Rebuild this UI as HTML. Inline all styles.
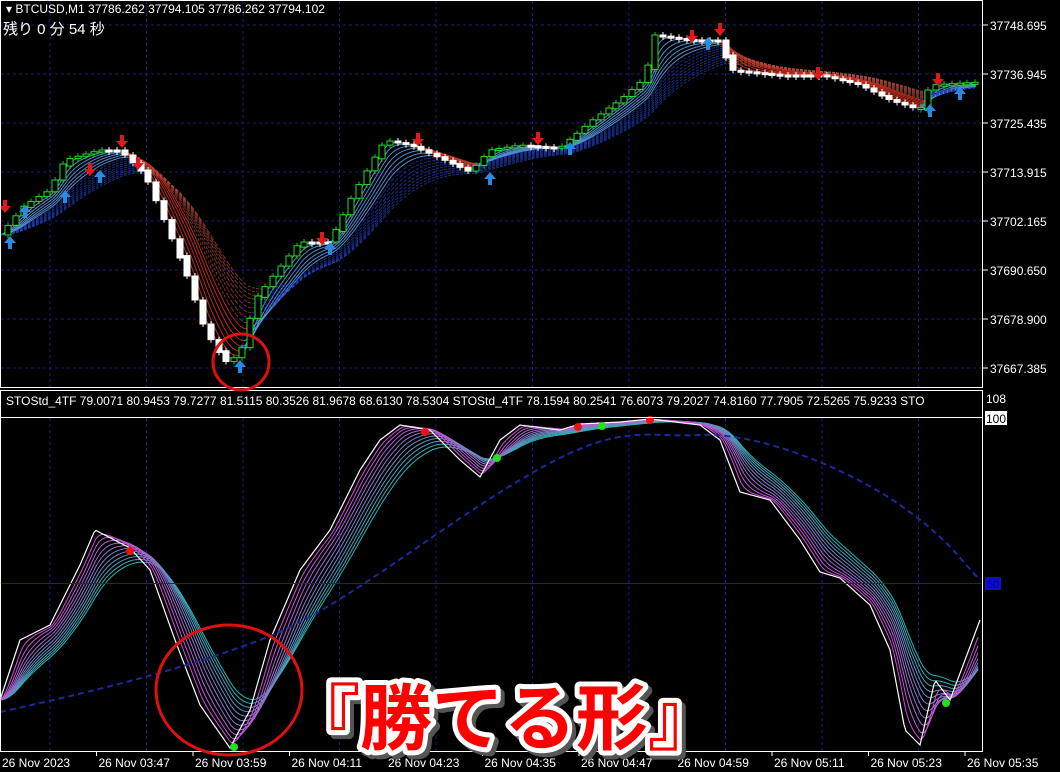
<!DOCTYPE html>
<html><head><meta charset="utf-8"><style>
html,body{margin:0;padding:0;background:#000;width:1060px;height:772px;overflow:hidden}
svg{display:block}
text{font-family:"Liberation Sans","Noto Sans CJK JP",sans-serif}
</style></head><body>
<svg id="s" width="1060" height="772" viewBox="0 0 1060 772" xmlns="http://www.w3.org/2000/svg">
<rect width="1060" height="772" fill="#000"/>
<g id="grid" stroke="#1c1c7a" stroke-dasharray="3,3" stroke-width="1"></g>
<g id="main"></g>
<g id="ind"></g>
<rect x="0.5" y="0.5" width="982" height="387" fill="none" stroke="#fff"/>
<rect x="0.5" y="390.5" width="982" height="361" fill="none" stroke="#fff"/>
<line x1="1" y1="417.5" x2="982" y2="417.5" stroke="#fff"/>
<line x1="1" y1="583.5" x2="982" y2="583.5" stroke="#1414d8"/>
<rect x="985" y="577" width="16" height="13" fill="#1010c0"/>
<text x="987" y="588" font-size="11" fill="#0000a0">50</text>
<g id="axis" fill="#fff" font-size="12"></g>
<text x="6" y="13" font-size="12" fill="#fff">▾ BTCUSD,M1  37786.262 37794.105 37786.262 37794.102</text>
<text x="3" y="34" font-size="15" fill="#fff" font-family="'Liberation Mono','Noto Sans CJK JP',monospace">残り 0 分 54 秒</text>
<text x="6" y="405" font-size="12" fill="#fff">STOStd_4TF 79.0071 80.9453 79.7277 81.5115 80.3526 81.9678 68.6130 78.5304  STOStd_4TF 78.1594 80.2541 76.6073 79.2027 74.8160 77.7905 72.5265 75.9233  STO</text>
<rect x="983" y="388" width="77" height="22" fill="#000"/>
<text x="986" y="403" font-size="12" fill="#fff">108</text>
<rect x="985" y="411" width="22" height="14" fill="#fff"/>
<text x="986" y="423" font-size="12" fill="#000">100</text>
<circle cx="241" cy="362" r="28" fill="none" stroke="#e01010" stroke-width="3"/>
<ellipse cx="229" cy="690" rx="73" ry="65" fill="none" stroke="#e01010" stroke-width="3"/>
<text x="288" y="744" font-size="72" font-weight="bold" fill="#555" stroke="#555" stroke-width="10" stroke-linejoin="round" transform="translate(4,4)" font-family="'Noto Sans CJK JP',sans-serif">『勝てる形』</text>
<text x="288" y="744" font-size="72" font-weight="bold" fill="#ff0000" stroke="#fff" stroke-width="10" stroke-linejoin="round" paint-order="stroke" font-family="'Noto Sans CJK JP',sans-serif">『勝てる形』</text>
</svg>
<script>
const NS="http://www.w3.org/2000/svg";
function el(p,t,a){const e=document.createElementNS(NS,t);for(const k in a)e.setAttribute(k,a[k]);p.appendChild(e);return e;}
const grid=document.getElementById('grid'),main=document.getElementById('main'),ind=document.getElementById('ind'),axis=document.getElementById('axis');
for(let x=50;x<983;x+=96.5){el(grid,'line',{x1:x,y1:1,x2:x,y2:387});el(grid,'line',{x1:x,y1:418,x2:x,y2:751});}
const prices=["37748.695","37736.945","37725.435","37713.915","37702.165","37690.650","37678.900","37667.385"];
prices.forEach((p,i)=>{const y=25+i*49;el(grid,'line',{x1:1,y1:y,x2:982,y2:y});
 el(axis,'line',{x1:983,y1:y,x2:988,y2:y,stroke:'#fff'});const t=el(axis,'text',{x:990,y:y+5});t.textContent=p;});
const times=["26 Nov 2023","26 Nov 03:47","26 Nov 03:59","26 Nov 04:11","26 Nov 04:23","26 Nov 04:35","26 Nov 04:47","26 Nov 04:59","26 Nov 05:11","26 Nov 05:23","26 Nov 05:35"];
times.forEach((s,i)=>{const x=2+i*96.5;const t=el(axis,'text',{x:x,y:767});t.textContent=s;if(i>0)el(axis,'line',{x1:x-2,y1:751,x2:x-2,y2:756,stroke:'#fff'});});
function interp(pts){const a=[];for(let x=0;x<=980;x++){let i=0;while(i<pts.length-2&&pts[i+1][0]<x)i++;const[x0,y0]=pts[i],[x1,y1]=pts[i+1];let t=(x-x0)/(x1-x0);t=Math.max(0,Math.min(1,t));a.push(y0+(y1-y0)*t);}return a;}
function ema(a,n){const k=2/(n+1);const o=[];let v=a[0];for(const y of a){v=v+k*(y-v);o.push(v);}return o;}
const P=interp([[0,235],[25,205],[50,190],[65,160],[100,150],[120,150],[145,175],[160,210],[185,270],[205,330],[225,362],[240,355],[255,300],[270,280],[300,242],[330,242],[350,200],[385,140],[410,145],[440,158],[470,172],[490,150],[520,145],[560,148],[590,122],[620,100],[645,78],[655,35],[690,40],[720,40],[730,70],[780,75],[820,75],[860,85],[890,100],[920,110],[930,85],[980,82]]);
for(let n=10;n<=130;n+=8){const e=ema(P,n);for(let x=4;x<980;x+=4){const up=e[x]<e[x-4];const slow=n>60;el(main,'line',{x1:x-4,y1:e[x-4],x2:x,y2:e[x],stroke:up?(slow?'#2040c0':'#5a9ae8'):(slow?'#b04838':'#d03020'),'stroke-width':1,'stroke-dasharray':slow?'3,2':'',opacity:slow?0.7:0.9});}}
for(let x=8;x<980;x+=7.8){const i=Math.round(x),o=P[Math.max(0,i-8)],c=P[i];const up=c<o;const top=Math.min(o,c),h=Math.max(2,Math.abs(c-o));
 el(main,'line',{x1:i,y1:top-3,x2:i,y2:top+h+3,stroke:up?'#20c020':'#fff'});
 el(main,'rect',{x:i-3,y:top,width:6,height:h,fill:up?'#000':'#fff',stroke:up?'#20e020':'#fff'});}
const arrows=[[10,244,1],[25,213,1],[65,198,1],[100,178,1],[240,368,1],[330,250,1],[490,180,1],[570,150,1],[708,45,1],[930,112,1],[960,95,1],[5,205,0],[90,168,0],[122,140,0],[138,162,0],[322,237,0],[418,138,0],[538,137,0],[692,35,0],[720,28,0],[818,72,0],[938,78,0]];
arrows.forEach(([x,y,u])=>{if(u)el(main,'path',{d:`M${x},${y-8} l-6,7 h4 v6 h4 v-6 h4 z`,fill:'#2a8ae0'});else el(main,'path',{d:`M${x},${y+8} l-6,-7 h4 v-6 h4 v6 h4 z`,fill:'#e01818'});});
const S=interp([[0,700],[20,640],[50,625],[80,565],[95,530],[130,548],[150,570],[175,640],[200,705],[230,748],[250,710],[270,640],[300,570],[330,530],[360,470],[380,440],[400,425],[430,430],[460,460],[480,477],[500,440],[520,425],[560,430],[580,424],[620,422],[650,419],[700,425],[720,440],[740,492],[770,500],[800,540],[820,572],[840,578],[870,605],[890,650],[905,730],[920,745],[935,680],[950,700],[980,620]]);
for(let n=80;n>=6;n-=7){const e=ema(S,n);const t=(n-6)/74;const r=Math.round(220-180*t),g=Math.round(70+110*t),b=Math.round(220-40*t);
 let d='M0,'+e[0];for(let x=3;x<=980;x+=3)d+=` L${x},${e[x].toFixed(1)}`;el(ind,'path',{d:d,fill:'none',stroke:`rgb(${r},${g},${b})`,'stroke-width':1});}
let d='M0,'+S[0];for(let x=2;x<=980;x+=2)d+=` L${x},${S[x].toFixed(1)}`;el(ind,'path',{d:d,fill:'none',stroke:'#fff','stroke-width':1.2});
el(ind,'path',{d:'M0,712 C100,690 180,670 260,640 S420,540 520,480 S640,438 700,435 S850,470 900,505 S960,560 980,580',fill:'none',stroke:'#1a2a9a','stroke-width':2,'stroke-dasharray':'6,4'});
[[130,551,'#f01010'],[425,432,'#f01010'],[578,427,'#f01010'],[650,420,'#f01010'],[497,458,'#20e020'],[602,426,'#20e020'],[234,747,'#20e020'],[946,703,'#20e020']].forEach(([x,y,c])=>el(ind,'circle',{cx:x,cy:y,r:4,fill:c}));
</script>
</body></html>
